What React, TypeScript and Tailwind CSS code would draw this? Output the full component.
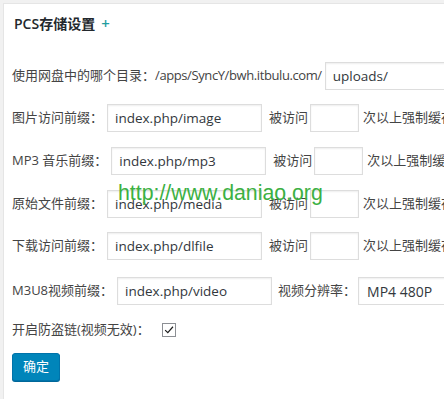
import React from "react"

const font = { fontFamily: '"Open Sans", "Noto Sans CJK SC", sans-serif' }

function Field({ value, className }: { value: string; className: string }) {
  return (
    <div
      className={`h-[28px] border border-[#dddddd] bg-white shadow-[inset_0_1px_2px_rgba(0,0,0,0.07)] flex items-center pl-[7px] text-[13.5px] text-[#32373c] overflow-hidden whitespace-nowrap ${className}`}
    >
      {value}
    </div>
  )
}

function PrefixRow({ label, value, className }: { label: string; value: string; className: string }) {
  return (
    <div className={`flex items-center h-[28px] whitespace-nowrap ${className}`}>
      <span>{label}</span>
      <Field value={value} className="w-[155px] shrink-0 ml-[4px]" />
      <span className="ml-[7px]">被访问</span>
      <Field value="" className="w-[49px] shrink-0 ml-[2px]" />
      <span className="ml-[4px]">次以上强制缓存</span>
    </div>
  )
}

export default function App() {
  return (
    <div className="w-[444px] h-[399px] bg-[#f1f1f1] pt-[3px] pl-[3px] overflow-hidden" style={font}>
      <div className="h-full border-t border-l border-[#e5e5e5] bg-white text-[13px] text-[#444]">
        <div className="h-[38px] flex items-center pl-[10px] pt-[1px]">
          <span className="text-[14px] font-semibold text-[#23282d]">PCS存储设置</span>
          <span className="ml-[6px] text-[15px] font-semibold text-[#1f9ea0]">+</span>
        </div>
        <div className="relative pl-[8px]">
          <div className="flex items-center h-[28px] mt-[20px] whitespace-nowrap">
            <span>
              使用网盘中的哪个目录：<span className="tracking-[-0.4px]">/apps/SyncY/bwh.itbulu.com/</span>
            </span>
            <Field value="uploads/" className="w-[160px] shrink-0 ml-[3px]" />
          </div>
          <PrefixRow label="图片访问前缀：" value="index.php/image" className="mt-[14px]" />
          <PrefixRow label="MP3 音乐前缀：" value="index.php/mp3" className="mt-[15px]" />
          <PrefixRow label="原始文件前缀：" value="index.php/media" className="mt-[15px]" />
          <PrefixRow label="下载访问前缀：" value="index.php/dlfile" className="mt-[14px]" />
          <div className="flex items-center h-[28px] mt-[17px] whitespace-nowrap">
            <span>M3U8视频前缀：</span>
            <Field value="index.php/video" className="w-[155px] shrink-0 ml-[4px]" />
            <span className="ml-[6px]">视频分辨率：</span>
            <Field value="MP4 480P" className="w-[100px] shrink-0 ml-[2px] pl-[8px] text-[14px]" />
          </div>
          <div className="flex items-center h-[28px] mt-[11px] whitespace-nowrap">
            <span>开启防盗链(视频无效)：</span>
            <span className="ml-[12px] w-[14px] h-[14px] border border-[#8c8f94] bg-white flex items-center justify-center">
              <svg viewBox="0 0 14 14" className="w-[12px] h-[12px]">
                <path d="M2.5 7.2 L5.6 10.2 L11.6 3.2" fill="none" stroke="#1e1e1e" strokeWidth="1.4" />
              </svg>
            </span>
          </div>
          <button className="mt-[9px] w-[48px] h-[28px] rounded-[3px] bg-[#0085ba] border border-[#0073aa] text-white text-[13px] shadow-[0_1px_0_#006799]">
            确定
          </button>
          <div
            className="absolute left-[114px] top-[121px] text-[21.3px] text-[#3cb043] whitespace-nowrap leading-none"
            style={{ fontFamily: '"Liberation Sans", Arial, sans-serif' }}
          >
            http://www.daniao.org
          </div>
        </div>
      </div>
    </div>
  )
}
